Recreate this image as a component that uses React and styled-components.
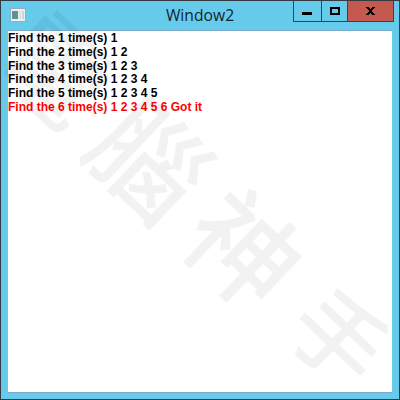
import React from "react";
import styled, { createGlobalStyle } from "styled-components";

const Global = createGlobalStyle`
  * { box-sizing: border-box; }
  html, body { margin: 0; padding: 0; overflow: hidden; }
`;

const Window = styled.main`
  position: relative;
  width: 400px;
  height: 400px;
  display: flex;
  flex-direction: column;
  overflow: hidden;
  padding: 0 7px 6px;
  background: #66caea;
  border: 1px solid #333a40;
`;

const TitleBar = styled.header`
  display: grid;
  grid-template-columns: 101px 1fr 101px;
  align-items: start;
  height: 29px;
  margin-right: -2px;
`;

const AppIcon = styled.svg`
  display: block;
  width: 16px;
  height: 14px;
  margin: 7px 0 0 2px;
`;

const Title = styled.h1`
  margin: 0;
  padding-right: 2px;
  color: #12262e;
  font: 400 15.7px/29px "Open Sans", "Noto Sans", sans-serif;
  text-align: center;
  white-space: nowrap;
`;

const Controls = styled.div`
  display: flex;
  height: 21px;
  width: 101px;
  border: 1px solid #2f4550;
  border-top: 0;
`;

const ControlButton = styled.button`
  flex: 0 0 ${(p) => p.$width}px;
  height: 20px;
  padding: 0;
  border: 0;
  border-left: ${(p) => (p.$divided ? "1px solid #2f4550" : "0")};
  background: ${(p) => (p.$danger ? "#c3594f" : "transparent")};

  svg {
    display: block;
  }
`;

const Content = styled.section`
  flex: 1;
  padding-top: 1px;
  background: #fff;
  border-top: 1px solid #79abc8;
  border-bottom: 1px solid #79abc8;
`;

const Log = styled.div`
  font: 700 12px/13.8px "Liberation Sans", Arial, sans-serif;
  white-space: nowrap;
`;

const LogLine = styled.div`
  color: ${(p) => (p.$found ? "#f00" : "#000")};
`;

const Watermark = styled.div`
  position: absolute;
  left: 200px;
  top: 199px;
  display: grid;
  grid-template-columns: repeat(4, 130px);
  place-items: center;
  color: rgba(0, 0, 0, 0.052);
  transform: translate(-50%, -50%) rotate(43.5deg);
  pointer-events: none;
`;

const Glyph = styled.div`
  font: 500 ${(p) => p.$size}px/70px "Noto Sans CJK TC", sans-serif;
`;

const attempts = [1, 2, 3, 4, 5, 6];

const watermark = [
  { text: "電", size: 104 },
  { text: "腦", size: 112 },
  { text: "神", size: 110 },
  { text: "手", size: 92 },
];

export default function App() {
  return (
    <>
      <Global />
      <Window>
        <TitleBar>
          <AppIcon viewBox="0 0 16 14" shapeRendering="crispEdges">
            <rect x="0" y="0" width="16" height="14" fill="#8fb0be" />
            <rect x="1" y="1" width="14" height="12" fill="#eeeeec" />
            <rect x="2" y="3" width="6" height="8" fill="#5f8fa8" />
            <rect x="3" y="5" width="4" height="5" fill="#4f9a80" />
            <rect x="9" y="3" width="2" height="8" fill="#e0e3e2" />
            <rect x="12" y="3" width="2" height="8" fill="#d0d4d4" />
          </AppIcon>
          <Title>Window2</Title>
          <Controls>
            <ControlButton $width={27} aria-label="Minimize">
              <svg width="27" height="20">
                <rect x="8" y="11" width="10" height="3" />
              </svg>
            </ControlButton>
            <ControlButton $width={26} $divided aria-label="Maximize">
              <svg width="25" height="20" shapeRendering="crispEdges">
                <path d="M8 6h10v8H8z M10 8v4h6V8z" fillRule="evenodd" />
              </svg>
            </ControlButton>
            <ControlButton $width={46} $divided $danger aria-label="Close">
              <svg width="45" height="20" shapeRendering="crispEdges">
                <path d="M18 6h3v1h1v1h1v-1h1v-1h3v1h-1v1h-1v1h-1v2h1v1h1v1h1v1h-3v-1h-1v-1h-1v1h-1v1h-3v-1h1v-1h1v-1h1v-2h-1v-1h-1v-1h-1z" />
              </svg>
            </ControlButton>
          </Controls>
        </TitleBar>
        <Content>
          <Log>
            {attempts.map((n) => (
              <LogLine key={n} $found={n === 6}>
                Find the {n} time(s) {attempts.slice(0, n).join(" ")}
                {n === 6 && " Got it"}
              </LogLine>
            ))}
          </Log>
        </Content>
        <Watermark>
          {watermark.map(({ text, size }) => (
            <Glyph key={text} $size={size}>
              {text}
            </Glyph>
          ))}
        </Watermark>
      </Window>
    </>
  );
}
